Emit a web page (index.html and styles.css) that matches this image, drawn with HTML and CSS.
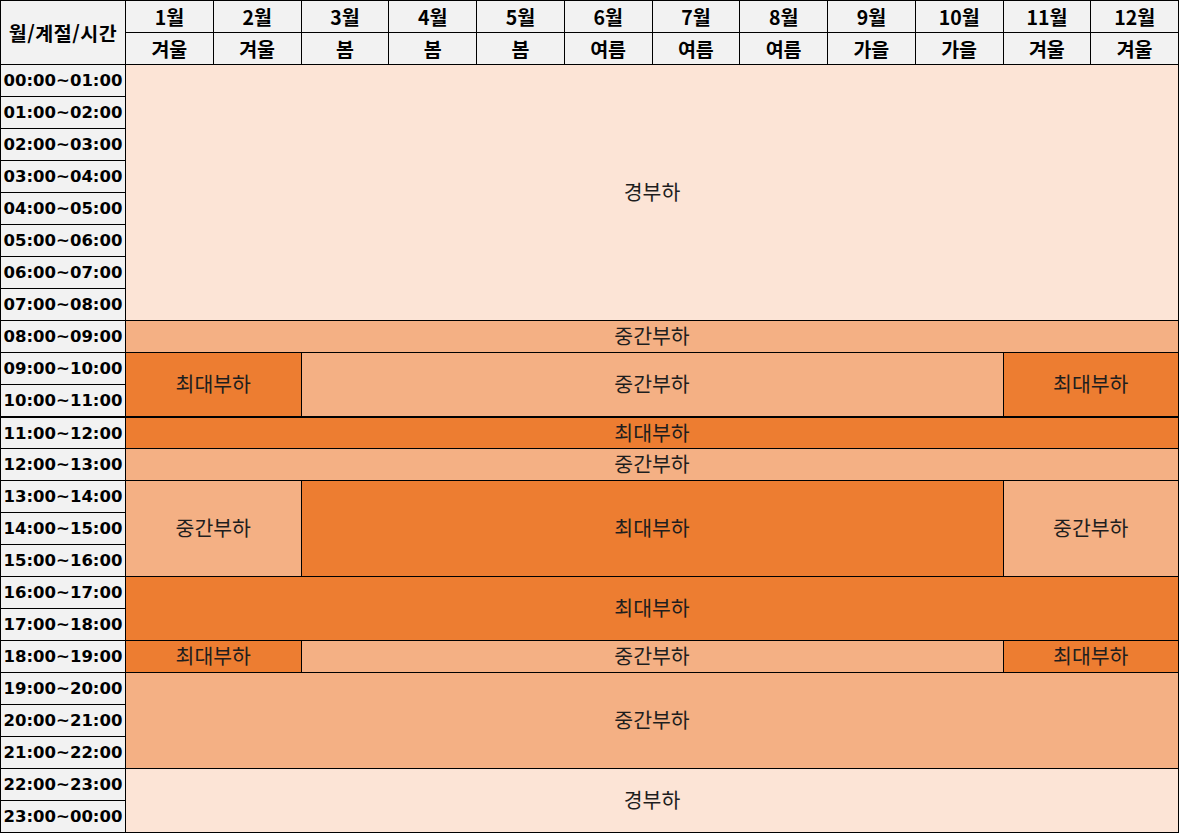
FILE: index.html
```html
<!DOCTYPE html>
<html lang="ko">
<head>
<meta charset="utf-8">
<title>계시별 부하 시간대</title>
<link rel="stylesheet" href="styles.css">
</head>
<body>
<div class="grid">
  <div class="head corner">월/계절/시간</div>
  <div class="head">1월</div><div class="head">2월</div><div class="head">3월</div><div class="head">4월</div>
  <div class="head">5월</div><div class="head">6월</div><div class="head">7월</div><div class="head">8월</div>
  <div class="head">9월</div><div class="head">10월</div><div class="head">11월</div><div class="head">12월</div>
  <div class="head">겨울</div><div class="head">겨울</div><div class="head">봄</div><div class="head">봄</div>
  <div class="head">봄</div><div class="head">여름</div><div class="head">여름</div><div class="head">여름</div>
  <div class="head">가을</div><div class="head">가을</div><div class="head">겨울</div><div class="head">겨울</div>

  <div class="time">00:00~01:00</div>
  <div class="time">01:00~02:00</div>
  <div class="time">02:00~03:00</div>
  <div class="time">03:00~04:00</div>
  <div class="time">04:00~05:00</div>
  <div class="time">05:00~06:00</div>
  <div class="time">06:00~07:00</div>
  <div class="time">07:00~08:00</div>
  <div class="time">08:00~09:00</div>
  <div class="time">09:00~10:00</div>
  <div class="time">10:00~11:00</div>
  <div class="time thick">11:00~12:00</div>
  <div class="time">12:00~13:00</div>
  <div class="time">13:00~14:00</div>
  <div class="time">14:00~15:00</div>
  <div class="time">15:00~16:00</div>
  <div class="time">16:00~17:00</div>
  <div class="time">17:00~18:00</div>
  <div class="time">18:00~19:00</div>
  <div class="time">19:00~20:00</div>
  <div class="time">20:00~21:00</div>
  <div class="time">21:00~22:00</div>
  <div class="time">22:00~23:00</div>
  <div class="time">23:00~00:00</div>

  <div class="cell light all b-night">경부하</div>
  <div class="cell mid all b-08">중간부하</div>
  <div class="cell peak left b-09">최대부하</div>
  <div class="cell mid center b-09">중간부하</div>
  <div class="cell peak right b-09">최대부하</div>
  <div class="cell peak all b-11 thick">최대부하</div>
  <div class="cell mid all b-12">중간부하</div>
  <div class="cell mid left b-13">중간부하</div>
  <div class="cell peak center b-13">최대부하</div>
  <div class="cell mid right b-13">중간부하</div>
  <div class="cell peak all b-16">최대부하</div>
  <div class="cell peak left b-18">최대부하</div>
  <div class="cell mid center b-18">중간부하</div>
  <div class="cell peak right b-18">최대부하</div>
  <div class="cell mid all b-19">중간부하</div>
  <div class="cell light all b-22">경부하</div>
</div>
</body>
</html>
```
FILE: styles.css
```css
html, body {
  margin: 0;
  padding: 0;
  background: #ffffff;
}

.grid {
  box-sizing: border-box;
  width: 1179px;
  height: 833px;
  padding: 1px;
  display: grid;
  grid-template-columns: 124px repeat(12, 1fr);
  grid-template-rows: repeat(26, 31px);
  gap: 1px;
  background: #000000;
}

.grid > div {
  display: flex;
  align-items: center;
  justify-content: center;
  box-sizing: border-box;
  white-space: nowrap;
}

.head {
  background: #f2f2f2;
  font-family: "Noto Sans CJK KR", sans-serif;
  font-weight: bold;
  font-size: 19.5px;
  color: #000;
  padding-bottom: 1px;
}

.corner {
  grid-column: 1;
  grid-row: 1 / 3;
  letter-spacing: 0.5px;
}

.time {
  grid-column: 1;
  background: #f2f2f2;
  font-family: "DejaVu Sans", "Noto Sans CJK KR", sans-serif;
  font-weight: bold;
  font-size: 16.5px;
  color: #000;
}

.cell {
  font-family: "Noto Sans CJK KR", sans-serif;
  font-size: 20.5px;
  color: #1e1e1e;
  padding-bottom: 3px;
}

.thick {
  border-top: 1px solid #000;
}

.light { background: #fce4d6; }
.mid { background: #f4b084; }
.peak { background: #ed7d31; }

.all { grid-column: 2 / 14; }
.left { grid-column: 2 / 4; }
.center { grid-column: 4 / 12; }
.right { grid-column: 12 / 14; }

.b-night { grid-row: 3 / 11; }
.b-08 { grid-row: 11 / 12; }
.b-09 { grid-row: 12 / 14; }
.b-11 { grid-row: 14 / 15; }
.b-12 { grid-row: 15 / 16; }
.b-13 { grid-row: 16 / 19; }
.b-16 { grid-row: 19 / 21; }
.b-18 { grid-row: 21 / 22; }
.b-19 { grid-row: 22 / 25; }
.b-22 { grid-row: 25 / 27; }
```
